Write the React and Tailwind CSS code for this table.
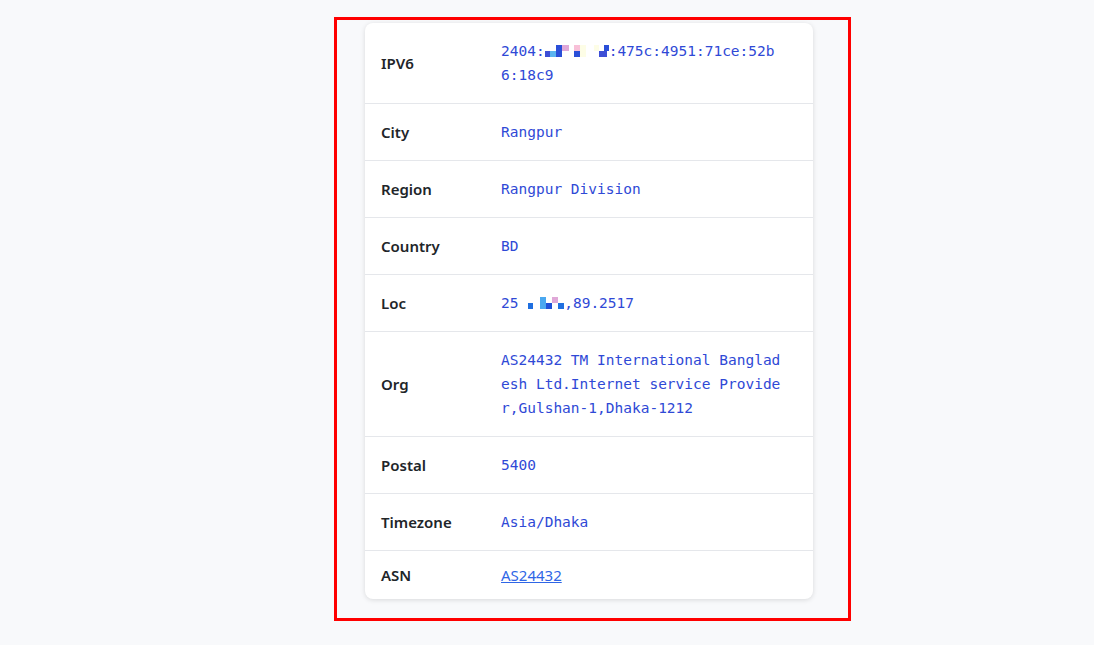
import React from "react";

const mono = { fontFamily: '"DejaVu Sans Mono", "Liberation Mono", monospace' };

function IpMask() {
  return (
    <svg width="64" height="12" viewBox="0 0 64 12" className="inline-block align-[-1px]">
      <rect x="0" y="6" width="5" height="6" fill="#3d4fd6" />
      <rect x="5" y="6" width="6" height="6" fill="#5ab4f0" />
      <rect x="11" y="0" width="6" height="12" fill="#2a4fd8" />
      <rect x="17" y="0" width="7" height="6" fill="#e0a8d8" />
      <rect x="29" y="0" width="6" height="6" fill="#f8c0d8" />
      <rect x="29" y="6" width="6" height="6" fill="#2a4fd8" />
      <rect x="35" y="0" width="6" height="12" fill="#fdfde6" />
      <rect x="49" y="0" width="5" height="6" fill="#fdfde6" />
      <rect x="54" y="6" width="5" height="6" fill="#3d4fd6" />
      <rect x="59" y="0" width="5" height="6" fill="#2a4fd8" />
      <rect x="59" y="6" width="3" height="6" fill="#3d4fd6" />
    </svg>
  );
}

function LocMask() {
  return (
    <svg width="37" height="12" viewBox="0 0 37 12" className="inline-block align-[-1px]">
      <rect x="1" y="6" width="5" height="6" fill="#1f6fe0" />
      <rect x="13" y="0" width="6" height="12" fill="#4aa8f0" />
      <rect x="19" y="6" width="6" height="6" fill="#2050d8" />
      <rect x="25" y="0" width="6" height="6" fill="#e0a8d8" />
      <rect x="31" y="6" width="6" height="6" fill="#2070e0" />
    </svg>
  );
}

function Row({ label, children, last }) {
  return (
    <div
      className={`flex items-center ${last ? "py-3" : "py-4 border-b border-[#e5e7eb]"}`}
    >
      <div className="w-[136px] shrink-0 pl-4 text-[15px] font-semibold text-[#212529] leading-6">
        {label}
      </div>
      <div
        className="w-[284px] text-[14.5px] leading-6 text-[#2f49d6] break-all"
        style={mono}
      >
        {children}
      </div>
    </div>
  );
}

export default function App() {
  return (
    <div
      className="relative w-full h-[645px] bg-[#f8f9fb] pt-[23px]"
      style={{ fontFamily: '"Noto Sans", "Open Sans", sans-serif' }}
    >
      <div className="ml-[365px] w-[448px] bg-white rounded-lg shadow-[0_1px_5px_rgba(0,0,0,0.13)]">
        <Row label="IPV6">
          2404:<IpMask />:475c:4951:71ce:52b6:18c9
        </Row>
        <Row label="City">Rangpur</Row>
        <Row label="Region">Rangpur Division</Row>
        <Row label="Country">BD</Row>
        <Row label="Loc">
          25 <LocMask />,89.2517
        </Row>
        <Row label="Org">
          AS24432 TM International Bangladesh Ltd.Internet service Provider,Gulshan-1,Dhaka-1212
        </Row>
        <Row label="Postal">5400</Row>
        <Row label="Timezone">Asia/Dhaka</Row>
        <div className="flex items-center py-3">
          <div className="w-[136px] shrink-0 pl-4 text-[15px] font-semibold text-[#212529] leading-6">
            ASN
          </div>
          <a href="#" className="text-[15px] leading-6 text-[#2f66e6] underline">
            AS24432
          </a>
        </div>
      </div>
      <div className="absolute left-[334px] top-[17px] w-[517px] h-[604px] border-[3px] border-[#ff0000] pointer-events-none" />
    </div>
  );
}
